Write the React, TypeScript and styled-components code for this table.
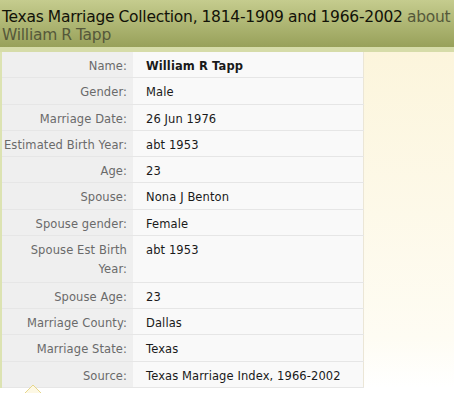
import React from 'react';
import styled, { createGlobalStyle } from 'styled-components';

const GlobalStyle = createGlobalStyle`
  html, body {
    margin: 0;
    padding: 0;
    background: #ffffff;
  }
  body {
    font-family: 'DejaVu Sans', Verdana, sans-serif;
  }
`;

type Row = { label: string; value: string; bold?: boolean; tall?: boolean };

const rows: Row[] = [
  { label: 'Name:', value: 'William R Tapp', bold: true },
  { label: 'Gender:', value: 'Male' },
  { label: 'Marriage Date:', value: '26 Jun 1976' },
  { label: 'Estimated Birth Year:', value: 'abt 1953' },
  { label: 'Age:', value: '23' },
  { label: 'Spouse:', value: 'Nona J Benton' },
  { label: 'Spouse gender:', value: 'Female' },
  { label: 'Spouse Est Birth Year:', value: 'abt 1953', tall: true },
  { label: 'Spouse Age:', value: '23' },
  { label: 'Marriage County:', value: 'Dallas' },
  { label: 'Marriage State:', value: 'Texas' },
  { label: 'Source:', value: 'Texas Marriage Index, 1966-2002' },
];

const App = () => {
  return (
    <Page>
      <GlobalStyle />
      <Header>
        <Title>
          Texas Marriage Collection, 1814-1909 and 1966-2002 <About>about</About>
          <br />
          <About>William R Tapp</About>
        </Title>
      </Header>
      <Strip />
      <Body>
        <Records>
          {rows.map((r) => (
            <RecordRow key={r.label}>
              <Label $tall={r.tall}>{r.label}</Label>
              <Value $bold={r.bold}>{r.value}</Value>
            </RecordRow>
          ))}
        </Records>
        <Side />
      </Body>
      <Caret>
        <svg width="18" height="10" viewBox="0 0 18 10">
          <path d="M1 9 L9 1 L17 9" fill="#fdf8e4" stroke="#e6d68c" strokeWidth="1" />
        </svg>
      </Caret>
    </Page>
  );
};

const Page = styled.div`
  width: 454px;
  height: 400px;
  overflow: hidden;
  position: relative;
  background: #ffffff;
`;

const Header = styled.div`
  height: 47px;
  padding: 8px 0 0 2px;
  box-sizing: border-box;
  background: linear-gradient(#c5cc8e, #98a15a);
`;

const Title = styled.div`
  font-size: 15.5px;
  line-height: 18px;
  color: #121208;
  letter-spacing: -0.25px;
  word-spacing: -0.5px;
  white-space: nowrap;
`;

const About = styled.span`
  color: #55583a;
`;

const Strip = styled.div`
  height: 5px;
  background: #d6dca9;
`;

const Body = styled.div`
  display: flex;
  align-items: stretch;
`;

const Records = styled.div`
  width: 364px;
  border-left: 2px solid #dce3b2;
  box-sizing: border-box;
  display: flex;
  flex-direction: column;
  flex-shrink: 0;
`;

const RecordRow = styled.div`
  display: grid;
  grid-template-columns: 131px 1fr;
  border-bottom: 1px solid #e6e6e6;
  font-size: 11.5px;
  letter-spacing: 0.1px;
  line-height: 19.3px;
`;

const Label = styled.div<{ $tall?: boolean }>`
  background: #efefef;
  color: #6a6a6a;
  text-align: right;
  padding: ${(p) => (p.$tall ? '5px 6px 2px 28px' : '5px 6px 1px 2px')};
  white-space: ${(p) => (p.$tall ? 'normal' : 'nowrap')};
`;

const Value = styled.div<{ $bold?: boolean }>`
  background: #f9f9f9;
  color: #1a1a1a;
  font-weight: ${(p) => (p.$bold ? 'bold' : 'normal')};
  padding: 5px 6px 1px 13px;
  white-space: nowrap;
  border-right: 1px solid #ebe6d6;
`;

const Side = styled.div`
  flex: 1;
  background: linear-gradient(#fcf5dc, #fefcf3 85%, #ffffff);
`;

const Caret = styled.div`
  position: absolute;
  left: 24px;
  top: 384px;
  line-height: 0;
`;

export default App;
